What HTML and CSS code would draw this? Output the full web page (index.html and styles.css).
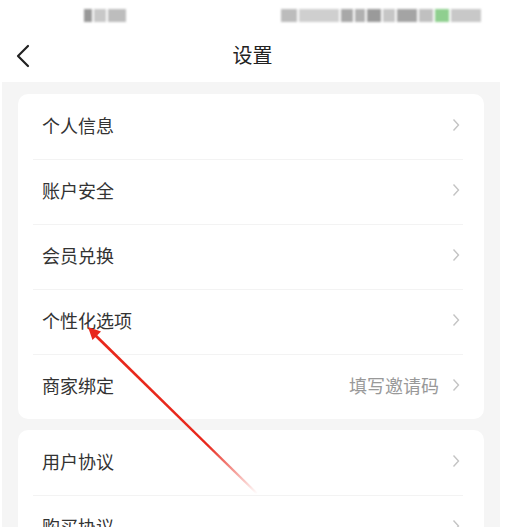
FILE: index.html
```html
<!DOCTYPE html>
<html lang="zh">
<head>
<meta charset="utf-8">
<link rel="stylesheet" href="styles.css">
</head>
<body>
<div class="page">
  <div class="status">
    <div class="blur-left">
      <span class="b b1"></span><span class="b b2"></span><span class="b b3"></span>
    </div>
    <div class="blur-right">
      <span class="b r1"></span><span class="b r2"></span><span class="b r3"></span><span class="b r4"></span><span class="b r5"></span><span class="b r6"></span><span class="b r7"></span><span class="b r8"></span><span class="b r9"></span><span class="b r10"></span>
    </div>
  </div>
  <div class="nav">
    <svg class="back" width="14" height="24" viewBox="0 0 14 24"><path d="M12 2 L2 12 L12 22" fill="none" stroke="#222" stroke-width="2.2" stroke-linecap="round" stroke-linejoin="round"/></svg>
    <div class="title">设置</div>
  </div>
  <div class="content">
    <div class="card">
      <div class="row"><span class="label">个人信息</span><span class="right"><svg class="chev" width="8" height="14" viewBox="0 0 8 14"><path d="M1.5 1.5 L6.5 7 L1.5 12.5" fill="none" stroke="#c4c4c4" stroke-width="1.4"/></svg></span></div>
      <div class="row"><span class="label">账户安全</span><span class="right"><svg class="chev" width="8" height="14" viewBox="0 0 8 14"><path d="M1.5 1.5 L6.5 7 L1.5 12.5" fill="none" stroke="#c4c4c4" stroke-width="1.4"/></svg></span></div>
      <div class="row"><span class="label">会员兑换</span><span class="right"><svg class="chev" width="8" height="14" viewBox="0 0 8 14"><path d="M1.5 1.5 L6.5 7 L1.5 12.5" fill="none" stroke="#c4c4c4" stroke-width="1.4"/></svg></span></div>
      <div class="row"><span class="label">个性化选项</span><span class="right"><svg class="chev" width="8" height="14" viewBox="0 0 8 14"><path d="M1.5 1.5 L6.5 7 L1.5 12.5" fill="none" stroke="#c4c4c4" stroke-width="1.4"/></svg></span></div>
      <div class="row"><span class="label">商家绑定</span><span class="right"><span class="hint">填写邀请码</span><svg class="chev" width="8" height="14" viewBox="0 0 8 14"><path d="M1.5 1.5 L6.5 7 L1.5 12.5" fill="none" stroke="#c4c4c4" stroke-width="1.4"/></svg></span></div>
    </div>
    <div class="card card2">
      <div class="row"><span class="label">用户协议</span><span class="right"><svg class="chev" width="8" height="14" viewBox="0 0 8 14"><path d="M1.5 1.5 L6.5 7 L1.5 12.5" fill="none" stroke="#c4c4c4" stroke-width="1.4"/></svg></span></div>
      <div class="row"><span class="label">购买协议</span><span class="right"><svg class="chev" width="8" height="14" viewBox="0 0 8 14"><path d="M1.5 1.5 L6.5 7 L1.5 12.5" fill="none" stroke="#c4c4c4" stroke-width="1.4"/></svg></span></div>
    </div>
  </div>
  <svg class="annot" width="505" height="527" viewBox="0 0 505 527">
    <defs>
      <linearGradient id="fade" gradientUnits="userSpaceOnUse" x1="92" y1="331" x2="258" y2="493">
        <stop offset="0" stop-color="#e8281c"/>
        <stop offset="0.7" stop-color="#e8281c"/>
        <stop offset="1" stop-color="#e8281c" stop-opacity="0"/>
      </linearGradient>
    </defs>
    <polygon points="94,332 258,493 256,494 92,334" fill="url(#fade)"/>
    <polygon points="88,327 101,331.5 92.5,340" fill="#e8281c"/>
  </svg>
</div>
</body>
</html>
```
FILE: styles.css
```css
html, body {
  margin: 0;
  padding: 0;
  background: #fff;
}
.page {
  position: relative;
  width: 505px;
  height: 527px;
  overflow: hidden;
  font-family: "Noto Sans CJK SC", "Noto Sans", sans-serif;
}
.status {
  height: 30px;
  display: flex;
  align-items: center;
  justify-content: space-between;
  padding: 0 24px 0 84px;
}
.blur-left, .blur-right {
  display: flex;
  align-items: center;
  gap: 2px;
  filter: blur(1.2px);
}
.b {
  display: block;
  height: 13px;
  background: #b8b8b8;
}
.b1 { width: 8px; background: #999; }
.b2 { width: 12px; background: #c8c8c8; }
.b3 { width: 18px; background: #bdbdbd; }
.r1 { width: 16px; background: #bcbcbc; }
.r2 { width: 40px; background: #cfcfcf; }
.r3 { width: 12px; background: #a8a8a8; }
.r4 { width: 10px; background: #b0b0b0; }
.r5 { width: 14px; background: #9a9a9a; }
.r6 { width: 12px; background: #c6c6c6; }
.r7 { width: 20px; background: #a4a4a4; }
.r8 { width: 14px; background: #c0c0c0; }
.r9 { width: 14px; background: #8fcf8f; }
.r10 { width: 30px; background: #c8c8c8; }
.nav {
  position: relative;
  height: 52px;
  display: flex;
  align-items: center;
  justify-content: center;
}
.back {
  position: absolute;
  left: 16px;
  top: 14px;
}
.title {
  font-size: 20px;
  color: #222;
  margin-top: -4px;
}
.content {
  background: #f5f5f5;
  margin: 0 5px 0 2px;
  padding: 12px 16px 0 16px;
  height: 445px;
  box-sizing: border-box;
}
.card {
  background: #fff;
  border-radius: 10px;
  padding: 0 21px 0 15px;
}
.card2 {
  margin-top: 11px;
}
.row {
  height: 65px;
  display: flex;
  align-items: center;
  justify-content: space-between;
  padding-left: 9px;
  padding-right: 3px;
  padding-bottom: 4px;
  border-top: 1px solid #f3f3f3;
  box-sizing: border-box;
}
.row:first-child {
  border-top: none;
}
.label {
  font-size: 18px;
  color: #333;
}
.right {
  display: flex;
  align-items: center;
  gap: 13px;
}
.hint {
  font-size: 18px;
  color: #999;
}
.chev {
  display: block;
}
.annot {
  position: absolute;
  left: 0;
  top: 0;
  pointer-events: none;
}
```
